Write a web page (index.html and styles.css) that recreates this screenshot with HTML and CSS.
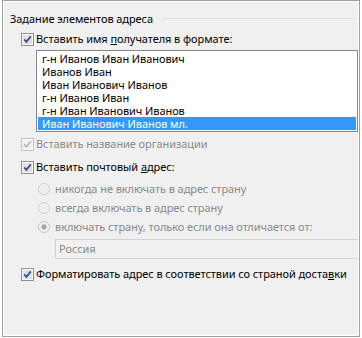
FILE: index.html
```html
<!DOCTYPE html>
<html lang="ru">
<head>
<meta charset="utf-8">
<title>Задание элементов адреса</title>
<link rel="stylesheet" href="styles.css">
</head>
<body>
<div class="frame">
  <div class="title-row">
    <span class="title">Задание элементов адреса</span>
    <span class="rule"></span>
  </div>

  <div class="row check-row r-check1">
    <svg class="cb" width="13" height="13" viewBox="0 0 13 13"><rect x="0.5" y="0.5" width="12" height="12" fill="#fdfdfd" stroke="#8e8f8f"/><rect x="2" y="2" width="9" height="9" fill="#dde2ea"/><path d="M3.2 6.4 L5.4 8.8 L9.8 3.4" fill="none" stroke="#3c4f8c" stroke-width="1.8"/></svg>
    <span class="label">Вставить имя <u>п</u>олучателя в формате:</span>
  </div>

  <div class="listbox">
    <div class="item">г-н Иванов Иван Иванович</div>
    <div class="item">Иванов Иван</div>
    <div class="item">Иван Иванович Иванов</div>
    <div class="item">г-н Иванов Иван</div>
    <div class="item">г-н Иван Иванович Иванов</div>
    <div class="item selected">Иван Иванович Иванов мл.</div>
  </div>

  <div class="row check-row r-check2 disabled">
    <svg class="cb" width="13" height="13" viewBox="0 0 13 13"><rect x="0.5" y="0.5" width="12" height="12" fill="#f7f7f7" stroke="#c3c3c3"/><rect x="2" y="2" width="9" height="9" fill="#f0f0f0"/><path d="M3.2 6.4 L5.4 8.8 L9.8 3.4" fill="none" stroke="#b4b4b4" stroke-width="1.6"/></svg>
    <span class="label">Вставить название организации</span>
  </div>

  <div class="row check-row r-check3">
    <svg class="cb" width="13" height="13" viewBox="0 0 13 13"><rect x="0.5" y="0.5" width="12" height="12" fill="#fdfdfd" stroke="#8e8f8f"/><rect x="2" y="2" width="9" height="9" fill="#dde2ea"/><path d="M3.2 6.4 L5.4 8.8 L9.8 3.4" fill="none" stroke="#3c4f8c" stroke-width="1.8"/></svg>
    <span class="label">Вставить почтовый <u>а</u>дрес:</span>
  </div>

  <div class="row radio-row r-radio1 disabled">
    <svg class="rb" width="12" height="12" viewBox="0 0 12 12"><circle cx="6" cy="6" r="5.5" fill="#f6f6f6" stroke="#cbcbcb"/><circle cx="6" cy="6" r="3.8" fill="#ececec"/></svg>
    <span class="label">никогда не включать в адрес страну</span>
  </div>

  <div class="row radio-row r-radio2 disabled">
    <svg class="rb" width="12" height="12" viewBox="0 0 12 12"><circle cx="6" cy="6" r="5.5" fill="#f6f6f6" stroke="#cbcbcb"/><circle cx="6" cy="6" r="3.8" fill="#ececec"/></svg>
    <span class="label">всегда включать в адрес страну</span>
  </div>

  <div class="row radio-row r-radio3 disabled">
    <svg class="rb" width="12" height="12" viewBox="0 0 12 12"><circle cx="6" cy="6" r="5.5" fill="#f6f6f6" stroke="#c4c4c4"/><circle cx="6" cy="6" r="3.8" fill="#e4e4e4"/><circle cx="6" cy="6" r="2.4" fill="#a2a2a2"/></svg>
    <span class="label">включать страну, только если она отличается от:</span>
  </div>

  <div class="textbox">Россия</div>

  <div class="row check-row r-check4">
    <svg class="cb" width="13" height="13" viewBox="0 0 13 13"><rect x="0.5" y="0.5" width="12" height="12" fill="#fdfdfd" stroke="#8e8f8f"/><rect x="2" y="2" width="9" height="9" fill="#dde2ea"/><path d="M3.2 6.4 L5.4 8.8 L9.8 3.4" fill="none" stroke="#3c4f8c" stroke-width="1.8"/></svg>
    <span class="label">Форматировать адрес в соответствии со страной доста<u>в</u>ки</span>
  </div>
</div>
</body>
</html>
```

FILE: styles.css
```css
html, body {
  margin: 0;
  padding: 0;
  background: #ffffff;
}

body {
  font-family: "Noto Sans", "Open Sans", "DejaVu Sans", sans-serif;
  font-size: 11px;
  letter-spacing: -0.07px;
  color: #000000;
}

.frame {
  margin-left: 2px;
  width: 356px;
  height: 335px;
  border: 1px solid #a0a0a0;
  background: #f0f0f0;
  box-shadow: inset 0 0 0 1px #ffffff;
  display: flex;
  flex-direction: column;
}

.title-row {
  display: flex;
  align-items: center;
  height: 16px;
  margin-top: 10px;
  padding-left: 7px;
  padding-right: 5px;
}

.title {
  line-height: 16px;
  white-space: nowrap;
}

.rule {
  flex: 1;
  height: 1px;
  background: #dcdcdc;
  margin-left: 9px;
  margin-top: -2px;
}

.row {
  display: flex;
  align-items: center;
  height: 16px;
  line-height: 16px;
  white-space: nowrap;
}

.check-row {
  padding-left: 18px;
}

.check-row .cb {
  flex: none;
  margin-right: 2px;
}

.radio-row {
  padding-left: 35px;
}

.radio-row .rb {
  flex: none;
  margin-right: 5px;
}

.disabled .label {
  color: #8a8a8a;
}

u {
  text-decoration: underline;
  text-underline-offset: 1px;
}

.r-check1 { margin-top: 4px; }

.listbox {
  margin-top: 3px;
  margin-left: 33px;
  width: 322px;
  height: 82px;
  box-sizing: border-box;
  border: 1px solid #828790;
  background: #ffffff;
  padding: 1px;
}

.item {
  height: 13px;
  line-height: 13px;
  padding-left: 4px;
  white-space: nowrap;
}

.item.selected {
  background: #3399ff;
  color: #ffffff;
}

.r-check2 { margin-top: 4px; }
.r-check3 { margin-top: 7px; }
.r-radio1 { margin-top: 6px; }
.r-radio2 { margin-top: 3px; }
.r-radio3 { margin-top: 3px; }

.textbox {
  margin-top: 4px;
  margin-left: 52px;
  width: 303px;
  height: 20px;
  box-sizing: border-box;
  border: 1px solid #d2d2d2;
  border-right: none;
  background: #f0f0f0;
  color: #8a8a8a;
  line-height: 18px;
  padding-left: 3px;
}

.r-check4 { margin-top: 7px; }
```
